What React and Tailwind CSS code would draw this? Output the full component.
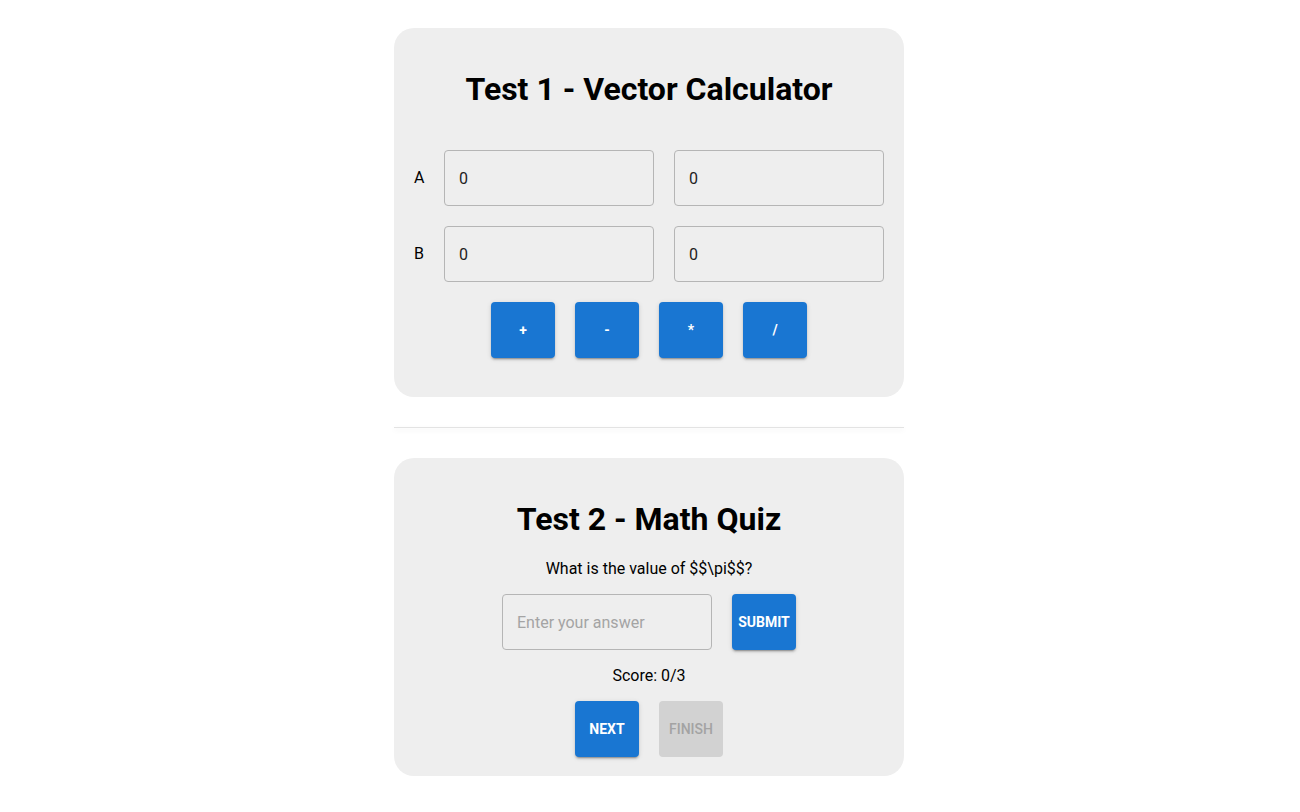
import React, { useState } from 'react';

const font = { fontFamily: 'Roboto, "Liberation Sans", sans-serif' };

function Btn({ children, disabled, onClick }) {
  return (
    <button
      onClick={onClick}
      disabled={disabled}
      className={
        disabled
          ? 'w-16 h-14 rounded-[4px] bg-[#d2d2d2] text-[#a3a3a3] text-sm font-medium uppercase'
          : 'w-16 h-14 rounded-[4px] bg-[#1976d2] text-white text-sm font-bold uppercase shadow-[0_3px_1px_-2px_rgba(0,0,0,0.2),0_2px_2px_0_rgba(0,0,0,0.14),0_1px_5px_0_rgba(0,0,0,0.12)]'
      }
    >
      {children}
    </button>
  );
}

function Field({ value, placeholder, onChange }) {
  return (
    <input
      value={value}
      placeholder={placeholder}
      onChange={onChange}
      className="w-[210px] h-14 rounded-[4px] border border-[#b5b5b5] bg-transparent pl-[14px] text-base text-[#222] placeholder:text-[#a4a4a4] outline-none"
    />
  );
}

export default function App() {
  const [a, setA] = useState(['0', '0']);
  const [b, setB] = useState(['0', '0']);
  const [answer, setAnswer] = useState('');

  return (
    <div className="min-h-screen bg-white pt-7" style={font}>
      <div className="w-[512px] mx-auto">
        <div className="w-[510px]">
          {/* vector calculator */}
          <div className="rounded-[20px] bg-[#eeeeee] px-5 pt-5 pb-[39px]">
            <h1 className="text-[32px] leading-10 font-bold text-black text-center mt-[21px] mb-[41px]">
              Test 1 - Vector Calculator
            </h1>
            <div className="flex flex-col gap-5">
              {[['A', a, setA], ['B', b, setB]].map(([label, vec, setVec]) => (
                <div key={label} className="flex items-center">
                  <span className="w-[30px] text-base text-black">{label}</span>
                  <div className="flex gap-5">
                    {vec.map((v, i) => (
                      <Field
                        key={i}
                        value={v}
                        onChange={(e) => {
                          const next = [...vec];
                          next[i] = e.target.value;
                          setVec(next);
                        }}
                      />
                    ))}
                  </div>
                </div>
              ))}
              <div className="flex justify-center gap-5">
                <Btn>+</Btn>
                <Btn>-</Btn>
                <Btn>*</Btn>
                <Btn>/</Btn>
              </div>
            </div>
          </div>

          <div className="my-[30px] h-px bg-[#e3e3e3] shadow-[0_2px_5px_rgba(0,0,0,0.1)]" />

          {/* quiz */}
          <div className="rounded-[20px] bg-[#eeeeee] px-5 pt-5 pb-[19px] flex flex-col items-center">
            <h1 className="text-[32px] leading-10 font-bold text-black text-center mt-[21px] mb-[18px]">
              Test 2 - Math Quiz
            </h1>
            <p className="text-base leading-6 text-black">What is the value of $$\pi$$?</p>
            <div className="flex gap-5 mt-[13px]">
              <Field value={answer} placeholder="Enter your answer" onChange={(e) => setAnswer(e.target.value)} />
              <Btn>Submit</Btn>
            </div>
            <p className="text-base leading-6 text-black mt-[14px]">Score: 0/3</p>
            <div className="flex gap-5 mt-[13px]">
              <Btn>Next</Btn>
              <Btn disabled>Finish</Btn>
            </div>
          </div>
        </div>
      </div>
    </div>
  );
}
